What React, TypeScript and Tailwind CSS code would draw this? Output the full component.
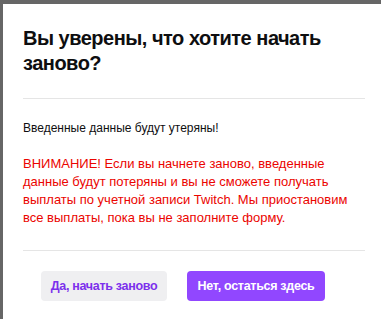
export default function App() {
  return (
    <div className="w-[381px] h-[319px] bg-[#666666] overflow-hidden relative" style={{ fontFamily: '"Liberation Sans", Arial, sans-serif' }}>
      <div className="absolute left-[3px] top-[4px] w-[400px] h-[340px] bg-white pl-[20px] pr-[38px]">
        <div className="pt-[22px] pb-[22px] border-b border-[#e5e5e5]">
          <h1 className="text-[20px] leading-[25px] tracking-[-0.5px] font-bold text-[#0e0e10]">Вы уверены, что хотите начать заново?</h1>
        </div>
        <div className="pt-[20px] pb-[23px] border-b border-[#e5e5e5]">
          <p className="text-[12px] leading-[18px] text-[#0e0e10]">Введенные данные будут утеряны!</p>
          <p className="mt-[18px] text-[13px] leading-[18px] text-[#eb0400]">ВНИМАНИЕ! Если вы начнете заново, введенные данные будут потеряны и вы не сможете получать выплаты по учетной записи Twitch. Мы приостановим все выплаты, пока вы не заполните форму.</p>
        </div>
        <div className="flex gap-[20px] pl-[18px] pt-[20px]">
          <button className="h-[30px] w-[126px] rounded-[4px] bg-[#efeff1] text-[#7c30ec] text-[12.5px] tracking-[-0.3px] font-bold">Да, начать заново</button>
          <button className="h-[30px] w-[138px] rounded-[4px] bg-[#9147ff] text-white text-[12.5px] tracking-[-0.3px] font-bold">Нет, остаться здесь</button>
        </div>
      </div>
    </div>
  );
}
